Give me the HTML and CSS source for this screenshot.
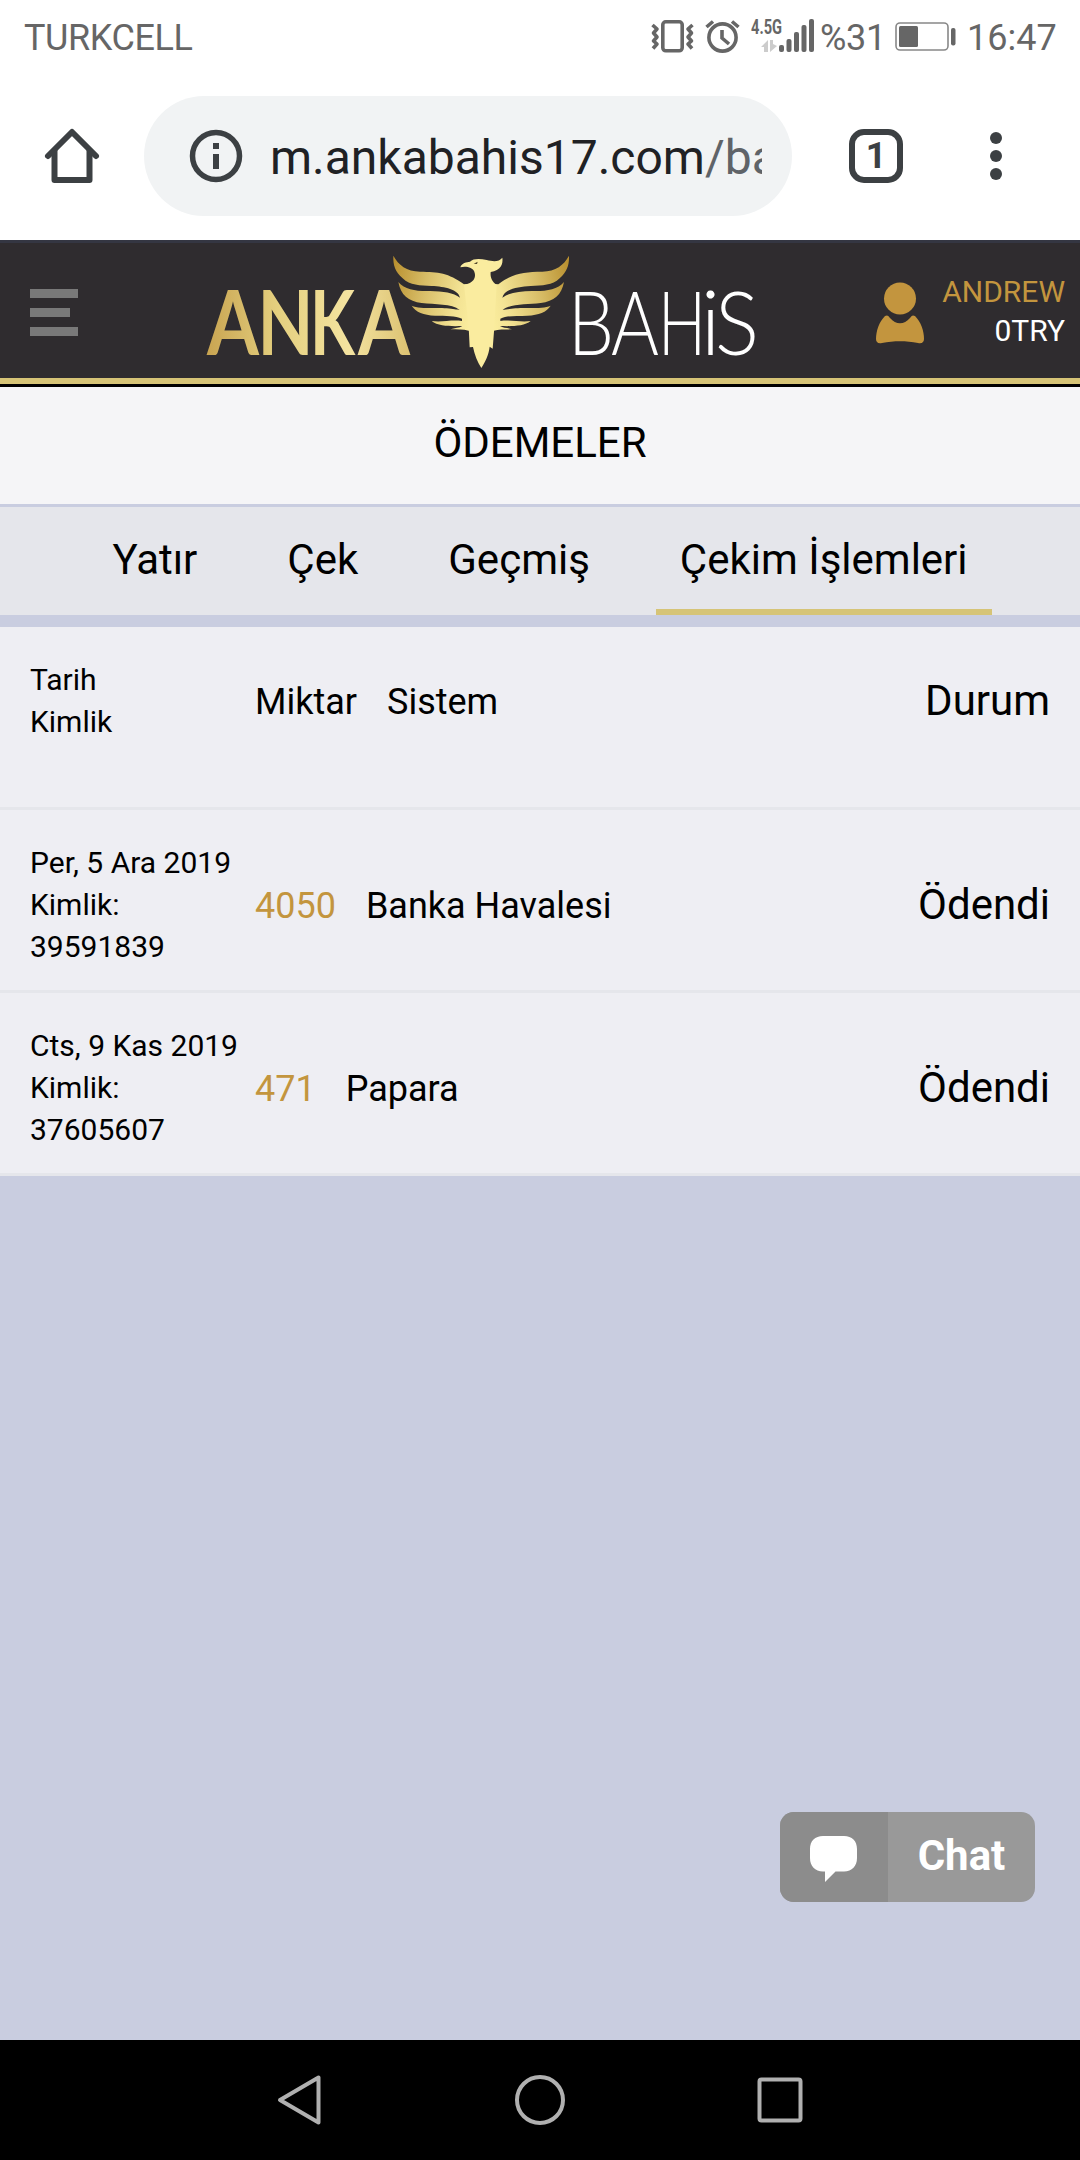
FILE: index.html
```html
<!DOCTYPE html>
<html lang="tr">
<head>
<meta charset="utf-8">
<title>Ankabahis - Ödemeler</title>
<link rel="stylesheet" href="styles.css">
</head>
<body>
<div class="screen">
  <div class="status-bar">
    <span class="carrier">TURKCELL</span>
    <div class="status-icons">
      <svg class="status-svg" width="170" height="72" viewBox="0 0 170 72">
        <g fill="none" stroke="#666" stroke-width="3.6" stroke-linejoin="round">
          <rect x="12.8" y="21.8" width="19.4" height="29" rx="3"/>
          <path d="M2.5 25 L7 29 L3.5 33 L7 37 L3.5 41 L7 44 L3 48.500"/>
          <path d="M42.500 25 L38 29 L41.500 33 L38 37 L41.500 41 L38 44 L42 48.500"/>
          <circle cx="72.500" cy="37.500" r="13.600"/>
          <path d="M72 30 V38 L79 44" stroke-linejoin="miter"/>
          <path d="M56.500 27 L63 21.500 M88.500 27 L82 21.500"/>
        </g>
        <text class="net" x="101" y="34" textLength="31" lengthAdjust="spacingAndGlyphs">4.5G</text>
        <g fill="#ccc">
          <path d="M111 47 L118 40 V52 H114 V47 Z"/>
          <path d="M120 40 H123 V44 L127 46 L120 52 Z"/>
        </g>
        <g fill="#666">
          <rect x="129" y="45" width="5" height="7" rx="2"/>
          <rect x="136.500" y="39" width="5" height="13" rx="2"/>
          <rect x="144" y="32" width="5" height="20" rx="2"/>
          <rect x="151.500" y="25" width="5" height="27" rx="2"/>
          <rect x="159" y="19" width="5" height="33" rx="2"/>
        </g>
      </svg>
      <span class="percent">%31</span>
      <svg class="battery" width="62" height="72" viewBox="0 0 62 72">
        <rect x="1" y="23" width="52" height="27" rx="4" fill="none" stroke="#888" stroke-width="1.600"/>
        <rect x="4" y="26" width="19" height="21" rx="1.500" fill="#666"/>
        <rect x="56" y="28" width="4.500" height="17.500" rx="2" fill="#666"/>
      </svg>
      <span class="clock">16:47</span>
    </div>
  </div>

  <div class="browser-bar">
    <svg class="home" width="72" height="72" viewBox="0 0 72 72" fill="none" stroke="#3c4043" stroke-width="6" stroke-linejoin="round" stroke-linecap="round">
      <path d="M12 36 L36 12 L60 36"/>
      <path d="M18.500 31 V60 H53.500 V31"/>
    </svg>
    <div class="omnibox">
      <svg width="54" height="54" viewBox="0 0 54 54">
        <circle cx="27" cy="27" r="23.500" fill="none" stroke="#3c4043" stroke-width="5.500"/>
        <path d="M24 14h6v6h-6zM24 25h6v15h-6z" fill="#3c4043"/>
      </svg>
      <div class="url">m.ankabahis17.com<span class="path">/bahis</span></div>
    </div>
    <div class="tab-count">1</div>
    <svg class="dots" width="12" height="48" viewBox="0 0 12 48" fill="#3c4043">
      <circle cx="6" cy="6" r="6"/><circle cx="6" cy="24" r="6"/><circle cx="6" cy="42" r="6"/>
    </svg>
  </div>

  <header class="site-header">
    <div class="burger"><i></i><i class="short"></i><i></i></div>
    <svg class="logo" width="560" height="135" viewBox="200 243 560 135">
      <defs>
        <linearGradient id="gold" gradientUnits="userSpaceOnUse" x1="208" y1="0" x2="410" y2="0">
          <stop offset="0" stop-color="#c9a552"/><stop offset=".35" stop-color="#e5d080"/>
          <stop offset=".7" stop-color="#f4e3a0"/><stop offset="1" stop-color="#dcc272"/>
        </linearGradient>
        <linearGradient id="plume" gradientUnits="userSpaceOnUse" x1="40" y1="60" x2="304" y2="120">
          <stop offset="0" stop-color="#b88f2e"/><stop offset=".4" stop-color="#d8bd67"/>
          <stop offset=".8" stop-color="#f3e394"/><stop offset="1" stop-color="#fbee9e"/>
        </linearGradient>
        <g id="wing">
          <path d="M40 47C55 75 80 94 120 95C175 96 205 98 252 133L304 130V275L266 272C250 267 232 269 211 268C225 263 238 264 247 258C220 259 175 260 155 243C185 247 215 239 246 243V236C225 226 200 229 165 227C130 225 108 217 95 197C120 208 170 202 200 205C220 207 230 209 239 210C215 190 165 194 125 189C85 184 62 165 55 126C75 150 110 154 150 153C190 154 220 158 240 173C235 148 195 140 155 138C120 136 90 137 68 115C45 94 39 75 40 47Z"/>
        </g>
      </defs>
      <g class="anka" fill="url(#gold)">
        <text x="207" y="355" textLength="52" lengthAdjust="spacingAndGlyphs">A</text>
        <text x="257.500" y="355" textLength="56" lengthAdjust="spacingAndGlyphs">N</text>
        <text x="310" y="355" textLength="45" lengthAdjust="spacingAndGlyphs">K</text>
        <text x="358" y="355" textLength="52" lengthAdjust="spacingAndGlyphs">A</text>
      </g>
      <g transform="translate(380 240) scale(.33333)" fill="url(#plume)">
        <use href="#wing"/>
        <use href="#wing" transform="translate(607 0) scale(-1 1)"/>
        <path fill="#faec9f" d="M241 82C245 68 260 67 270 65C280 55 300 56 320 60C340 65 357 66 367 53C370 72 362 91 332 96C330 112 337 127 350 134L343 262L338 326L329 320C326 345 316 365 304 384C292 365 284 345 279 321L269 322L266 262L252 134C280 130 290 112 283 95C278 82 257 77 241 82Z"/>
        <path d="M281 71L293 65L291 72Z" fill="#4a4028"/>
      </g>
      <g class="bahis">
        <text x="568" y="355" textLength="46" lengthAdjust="spacingAndGlyphs">B</text>
        <text x="611" y="355" textLength="48" lengthAdjust="spacingAndGlyphs">A</text>
        <text x="658" y="355" textLength="48" lengthAdjust="spacingAndGlyphs">H</text>
        <text class="dot-i" x="700.500" y="355">i</text>
        <text x="715" y="355" textLength="44" lengthAdjust="spacingAndGlyphs">S</text>
      </g>
    </svg>
    <div class="account">
      <svg width="48" height="62" viewBox="0 0 48 62" fill="#c3953e">
        <circle cx="24" cy="16.500" r="16"/>
        <path d="M9 34C11 33 12 33 14 36C20 43 28 43 34 36C36 33 37 33 39 34C45 40 48 49 48 57C48 60 46 62 42 61C30 58.500 18 58.500 6 61C2 62 0 60 0 57C0 49 3 40 9 34Z"/>
      </svg>
      <div class="who"><span class="name">ANDREW</span><span>0TRY</span></div>
    </div>
  </header>

  <h1 class="title">ÖDEMELER</h1>
  <nav class="tabs">
    <a>Yatır</a><a>Çek</a><a>Geçmiş</a><a class="active">Çekim İşlemleri</a>
  </nav>

  <main class="list">
    <div class="row">
      <div class="date">Tarih<br>Kimlik</div>
      <div class="amount">Miktar</div><div class="system">Sistem</div><div class="state">Durum</div>
    </div>
    <div class="row">
      <div class="date">Per, 5 Ara 2019<br>Kimlik:<br>39591839</div>
      <div class="amount money">4050</div><div class="system">Banka Havalesi</div><div class="state">Ödendi</div>
    </div>
    <div class="row">
      <div class="date">Cts, 9 Kas 2019<br>Kimlik:<br>37605607</div>
      <div class="amount money">471</div><div class="system">Papara</div><div class="state">Ödendi</div>
    </div>
  </main>

  <div class="chat">
    <div class="chat-icon">
      <svg width="48" height="48" viewBox="0 0 48 48" fill="#fff"><path d="M13 0H34C42 0 47 5 47 13V22C47 30 42 35.500 34 35.500H25.500L15 46V35.500H13C5 35.500 0 30 0 22V13C0 5 5 0 13 0Z"/></svg>
    </div>
    <div class="chat-label">Chat</div>
  </div>

  <div class="nav-bar">
    <svg width="600" height="120" viewBox="240 2040 600 120" fill="none" stroke="#b0b0b0" stroke-width="4" stroke-linejoin="round">
      <path d="M280 2100L318.500 2077.500V2122.500Z"/>
      <circle cx="540" cy="2100" r="23"/>
      <rect x="759.500" y="2079.500" width="41" height="41" rx="2"/>
    </svg>
  </div>
</div>
</body>
</html>
```
FILE: styles.css
```css
* { box-sizing: border-box; }
body { margin: 0; font-family: Roboto, "Liberation Sans", sans-serif; color: #000; }
.screen { position: relative; width: 1080px; height: 2160px; display: flex; flex-direction: column; background: #c9cde0; overflow: hidden; }
svg { display: block; flex: none; }

.status-bar { height: 72px; background: #fff; display: flex; justify-content: space-between; padding: 0 24px 0 24px; color: #666; font-size: 36px; line-height: 76px; }
.carrier { letter-spacing: -.4px; }
.status-icons { display: flex; }
.net { font: 700 21px Roboto, sans-serif; fill: #666; }
.percent { width: 75px; letter-spacing: -.3px; }
.clock { margin-left: 10px; width: 89px; }

.browser-bar { height: 168px; background: #fff; display: flex; align-items: center; padding: 0 78px 0 36px; }
.omnibox { width: 648px; height: 120px; margin-left: 36px; border-radius: 60px; background: #f1f3f4; display: flex; align-items: center; padding: 0 30px 0 45px; }
.url { flex: 1; margin-left: 27px; overflow: hidden; white-space: nowrap; font-size: 48px; line-height: 60px; color: #202124; padding-top: 3px; }
.path { color: #5f6368; }
.tab-count { width: 54px; height: 54px; margin-left: 57px; border: 6px solid #3c4043; border-radius: 15px; font-size: 36px; font-weight: 700; line-height: 43px; text-align: center; color: #3c4043; }
.dots { margin-left: 87px; }

.site-header { height: 147px; border-top: 3px solid #343642; border-bottom: 3px solid #000; box-shadow: inset 0 -6px #d6c477; background: #2f2c2f; display: flex; align-items: flex-start; }
.burger { width: 48px; margin: 46px 0 0 30px; display: flex; flex-direction: column; gap: 10px; }
.burger i { height: 9px; background: #797979; }
.burger .short { width: 40px; }
.logo { margin-left: 122px; }
.anka { font: 700 89px Lato, sans-serif; }
.bahis { font: 300 89px Lato, sans-serif; fill: #fff; }
.dot-i { font-size: 90px; }
.account { flex: 1; display: flex; justify-content: flex-end; gap: 18px; padding: 38px 15px 0 0; font-size: 30px; line-height: 39px; }
.account svg { margin-top: 1px; }
.who { display: flex; flex-direction: column; align-items: flex-end; color: #fff; margin-top: -9px; }
.name { color: #c3953e; }

.title { height: 120px; margin: 0; background: #f5f5f7; border-bottom: 3px solid #c9cde0; font-size: 42px; font-weight: 400; line-height: 111px; text-align: center; }
.tabs { height: 108px; background: #e5e6eb; display: flex; justify-content: center; gap: 42px; font-size: 42px; line-height: 105px; }
.tabs a { padding: 0 24px; }
.tabs .active { box-shadow: inset 0 -6px #d6c477; }

.list { margin-top: 12px; }
.row { height: 183px; background: #eeeef3; border-bottom: 3px solid #e5e6eb; padding: 0 30px; display: flex; align-items: flex-start; }
.date { width: 225px; padding-top: 32px; font-size: 30px; line-height: 42px; }
.amount, .system { font-size: 36px; line-height: 42px; padding-top: 75px; margin-right: 30px; }
.money { color: #c3953e; }
.state { margin: 72px 0 0 auto; font-size: 42px; line-height: 46px; overflow: hidden; }
.row:first-child .amount, .row:first-child .system { padding-top: 54px; }
.row:first-child .state { margin-top: 51px; }

.chat { position: absolute; left: 780px; top: 1812px; width: 255px; height: 90px; border-radius: 14px; overflow: hidden; display: flex; background: #999; }
.chat-icon { width: 108px; background: #8c8c8c; padding: 24px 0 0 30px; }
.chat-label { flex: 1; text-align: center; color: #fff; font-size: 42px; font-weight: 700; line-height: 87px; }

.nav-bar { height: 120px; margin-top: auto; background: #000; display: flex; justify-content: center; }
```
